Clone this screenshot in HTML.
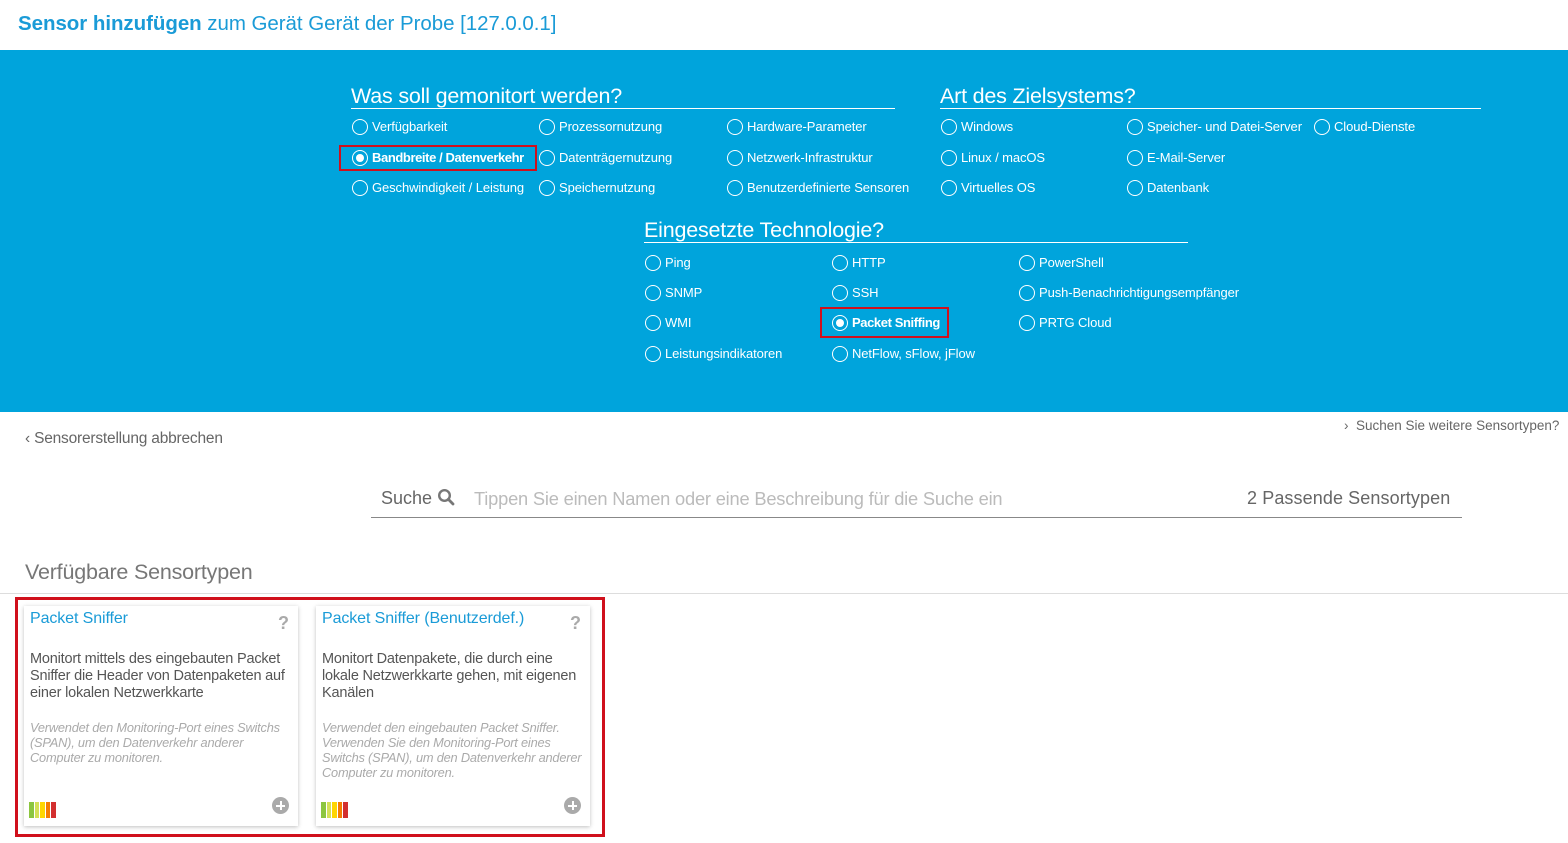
<!DOCTYPE html>
<html><head><meta charset="utf-8">
<style>
*{margin:0;padding:0;box-sizing:border-box}
body{width:1568px;height:843px;background:#fff;font-family:"Liberation Sans",sans-serif;position:relative;overflow:hidden}
.a{position:absolute;white-space:nowrap}
.t{position:absolute;top:0;left:0;font-size:20.5px;color:#1a9bd7;letter-spacing:-0.05px}
.band{position:absolute;left:0;top:50px;width:1568px;height:362px;background:#00a4dc}
.h{position:absolute;color:#fff;font-size:21.5px;letter-spacing:-0.2px;border-bottom:1px solid #fff;padding-bottom:0;line-height:24px}
.r{position:absolute;color:#fff;font-size:13px;letter-spacing:-0.1px;line-height:16px;white-space:nowrap;padding-left:20px}
.r:before{content:"";position:absolute;left:0;top:0;width:14px;height:14px;border:1.6px solid #fff;border-radius:50%}
.r.s{font-weight:bold;letter-spacing:-0.4px}
.r.s:after{content:"";position:absolute;left:4px;top:4px;width:8px;height:8px;background:#fff;border-radius:50%}
.box{position:absolute;border:2px solid #d0101c}
.card{position:absolute;top:606px;width:274px;height:220px;background:#fff;box-shadow:0 1px 4px rgba(0,0,0,.25)}
.ct{position:absolute;left:6px;top:4px;font-size:16px;color:#1a9bd7;letter-spacing:-0.1px}
.q{position:absolute;right:9px;top:7px;font-size:18px;font-weight:bold;color:#aaa}
.cd{position:absolute;left:6px;top:45px;width:264px;font-size:14.5px;line-height:17px;color:#555;letter-spacing:-0.2px}
.ci{position:absolute;left:6px;top:114px;width:264px;font-size:12.8px;line-height:15px;color:#aaa;font-style:italic;letter-spacing:-0.2px}
.bars{position:absolute;left:5px;bottom:8px;display:flex;gap:1px}
.bars i{display:block;width:4.5px;height:16px}
.plus{position:absolute;right:9px;bottom:12px;width:17px;height:17px;border-radius:50%;background:#aaa}
.plus:before{content:"";position:absolute;left:4px;top:7.5px;width:9px;height:2px;background:#fff}
.plus:after{content:"";position:absolute;left:7.5px;top:4px;width:2px;height:9px;background:#fff}
</style></head><body>
<div class="a t" style="left:18px;top:12px"><b>Sensor hinzufügen</b> zum Gerät Gerät der Probe [127.0.0.1]</div>
<div class="band"></div>
<div class="h" style="left:351px;top:84px;width:544px">Was soll gemonitort werden?</div>
<div class="h" style="left:940px;top:84px;width:541px">Art des Zielsystems?</div>
<div class="h" style="left:644px;top:218px;width:544px">Eingesetzte Technologie?</div>

<div class="r" style="left:352px;top:119px">Verfügbarkeit</div>
<div class="r s" style="left:352px;top:150px">Bandbreite / Datenverkehr</div>
<div class="r" style="left:352px;top:180px">Geschwindigkeit / Leistung</div>
<div class="r" style="left:539px;top:119px">Prozessornutzung</div>
<div class="r" style="left:539px;top:150px">Datenträgernutzung</div>
<div class="r" style="left:539px;top:180px">Speichernutzung</div>
<div class="r" style="left:727px;top:119px">Hardware-Parameter</div>
<div class="r" style="left:727px;top:150px">Netzwerk-Infrastruktur</div>
<div class="r" style="left:727px;top:180px">Benutzerdefinierte Sensoren</div>

<div class="r" style="left:941px;top:119px">Windows</div>
<div class="r" style="left:941px;top:150px">Linux / macOS</div>
<div class="r" style="left:941px;top:180px">Virtuelles OS</div>
<div class="r" style="left:1127px;top:119px">Speicher- und Datei-Server</div>
<div class="r" style="left:1127px;top:150px">E-Mail-Server</div>
<div class="r" style="left:1127px;top:180px">Datenbank</div>
<div class="r" style="left:1314px;top:119px">Cloud-Dienste</div>

<div class="r" style="left:645px;top:255px">Ping</div>
<div class="r" style="left:645px;top:285px">SNMP</div>
<div class="r" style="left:645px;top:315px">WMI</div>
<div class="r" style="left:645px;top:346px">Leistungsindikatoren</div>
<div class="r" style="left:832px;top:255px">HTTP</div>
<div class="r" style="left:832px;top:285px">SSH</div>
<div class="r s" style="left:832px;top:315px">Packet Sniffing</div>
<div class="r" style="left:832px;top:346px">NetFlow, sFlow, jFlow</div>
<div class="r" style="left:1019px;top:255px">PowerShell</div>
<div class="r" style="left:1019px;top:285px">Push-Benachrichtigungsempfänger</div>
<div class="r" style="left:1019px;top:315px">PRTG Cloud</div>

<div class="box" style="left:339px;top:145px;width:198px;height:26px"></div>
<div class="box" style="left:820px;top:307px;width:129px;height:31px"></div>

<div class="a" style="left:25px;top:430px;font-size:15.5px;color:#666;letter-spacing:-0.2px">‹ Sensorerstellung abbrechen</div>
<div class="a" style="left:1344px;top:418px;font-size:13.5px;color:#666;letter-spacing:0">›&nbsp; Suchen Sie weitere Sensortypen?</div>

<div class="a" style="left:371px;top:517px;width:1091px;height:1px;background:#888"></div>
<div class="a" style="left:381px;top:488px;font-size:18px;color:#666">Suche</div>
<svg class="a" style="left:437px;top:488px" width="18" height="18" viewBox="0 0 18 18"><circle cx="7.5" cy="7.5" r="5.3" fill="none" stroke="#777" stroke-width="2.4"/><path d="M11.3 11.3L16 16" stroke="#777" stroke-width="2.8" stroke-linecap="round"/></svg>
<div class="a" style="left:474px;top:488px;font-size:18.3px;color:#bbb;letter-spacing:-0.2px">Tippen Sie einen Namen oder eine Beschreibung für die Suche ein</div>
<div class="a" style="left:1247px;top:488px;font-size:18px;color:#666;letter-spacing:0.1px">2 Passende Sensortypen</div>

<div class="a" style="left:25px;top:560px;font-size:21.5px;color:#777;letter-spacing:-0.2px">Verfügbare Sensortypen</div>
<div class="a" style="left:0;top:593px;width:1568px;height:1px;background:#ddd"></div>

<div class="box" style="left:15px;top:597px;width:590px;height:240px;border-width:3px"></div>

<div class="card" style="left:24px">
<div class="ct">Packet Sniffer</div><div class="q">?</div>
<div class="cd">Monitort mittels des eingebauten Packet Sniffer die Header von Datenpaketen auf einer lokalen Netzwerkkarte</div>
<div class="ci">Verwendet den Monitoring-Port eines Switchs (SPAN), um den Datenverkehr anderer Computer zu monitoren.</div>
<div class="bars"><i style="background:#8cc63f"></i><i style="background:#d4e157"></i><i style="background:#ffd600"></i><i style="background:#f57c00"></i><i style="background:#d32f2f"></i></div>
<div class="plus"></div>
</div>
<div class="card" style="left:316px">
<div class="ct">Packet Sniffer (Benutzerdef.)</div><div class="q">?</div>
<div class="cd">Monitort Datenpakete, die durch eine lokale Netzwerkkarte gehen, mit eigenen Kanälen</div>
<div class="ci">Verwendet den eingebauten Packet Sniffer. Verwenden Sie den Monitoring-Port eines Switchs (SPAN), um den Datenverkehr anderer Computer zu monitoren.</div>
<div class="bars"><i style="background:#8cc63f"></i><i style="background:#d4e157"></i><i style="background:#ffd600"></i><i style="background:#f57c00"></i><i style="background:#d32f2f"></i></div>
<div class="plus"></div>
</div>
</body></html>
